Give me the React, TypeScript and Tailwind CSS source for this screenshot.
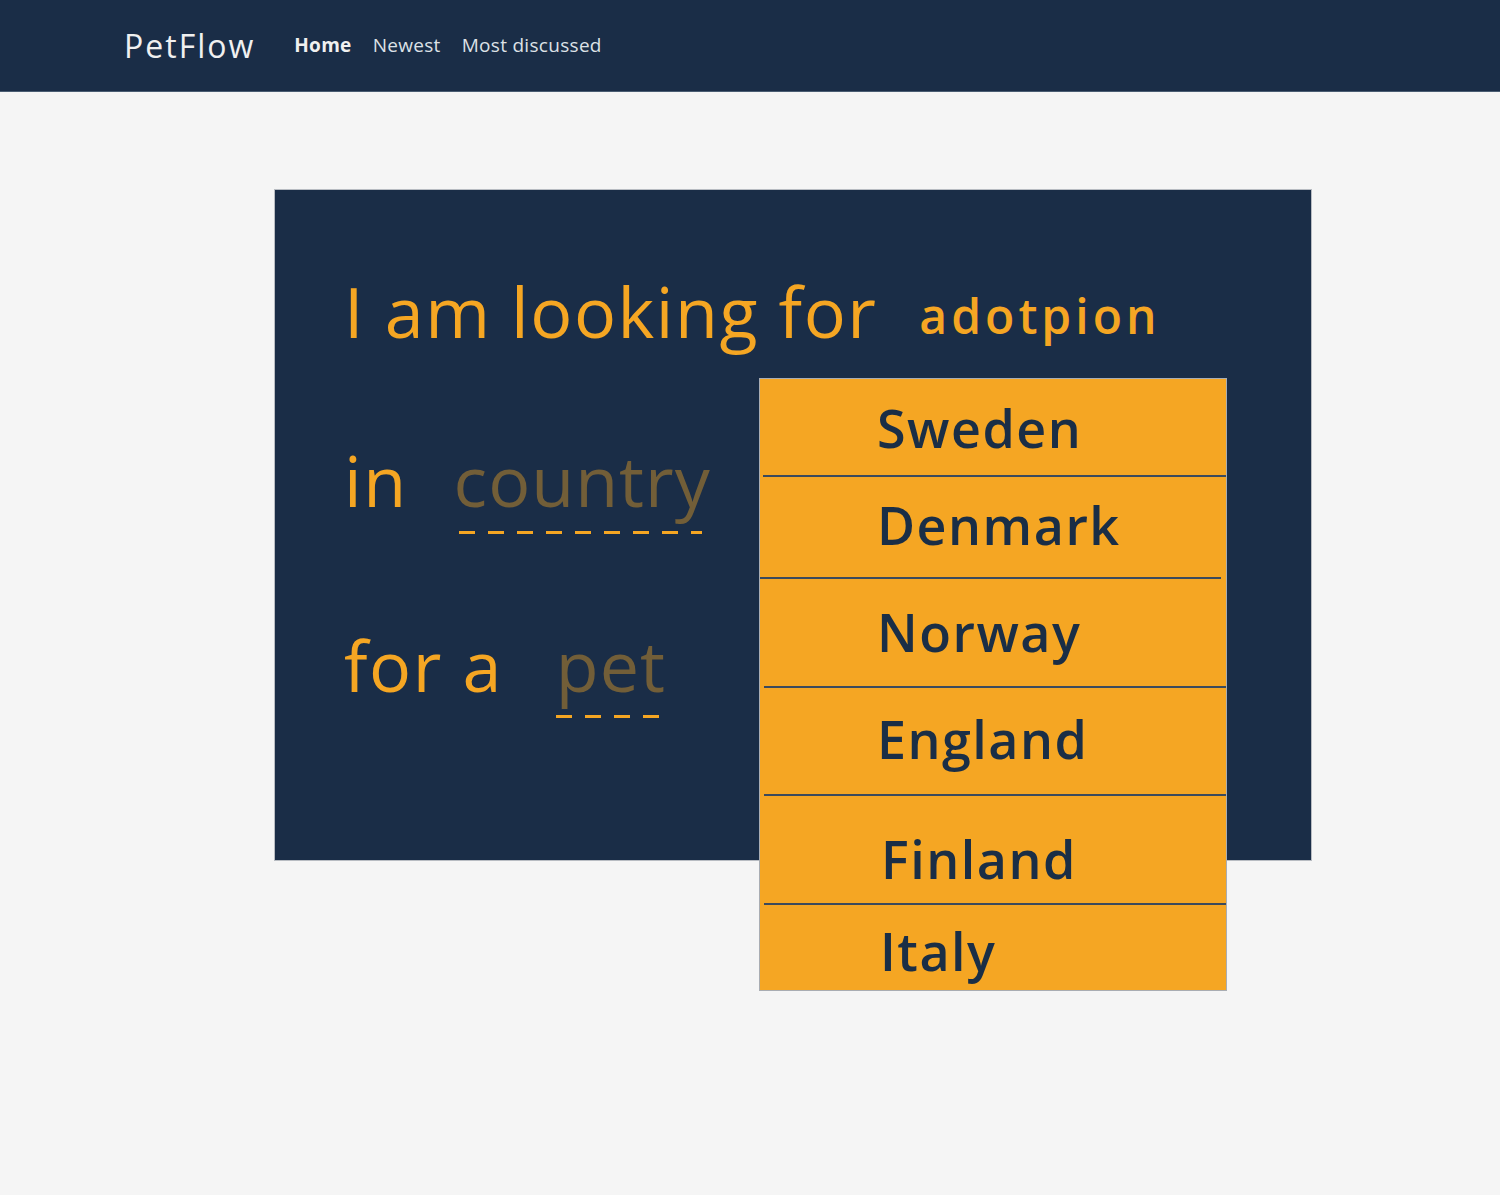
import React from 'react';

const navLinks = [
  { label: 'Home', active: true },
  { label: 'Newest', active: false },
  { label: 'Most discussed', active: false },
];

// each item: height, top padding for the text, left nudge, separator inset
const countries = [
  { name: 'Sweden', h: 'h-[96px]', pt: 'pt-[23px]', pl: 'pl-[117px]', line: 'ml-[3px]' },
  { name: 'Denmark', h: 'h-[100px]', pt: 'pt-[22px]', pl: 'pl-[117px]', line: 'mr-[5px]' },
  { name: 'Norway', h: 'h-[107px]', pt: 'pt-[27px]', pl: 'pl-[117px]', line: 'ml-[4px]' },
  { name: 'England', h: 'h-[106px]', pt: 'pt-[25px]', pl: 'pl-[117px]', line: 'ml-[4px]' },
  { name: 'Finland', h: 'h-[107px]', pt: 'pt-[37px]', pl: 'pl-[121px]', line: 'ml-[4px]' },
  { name: 'Italy', h: 'h-[85px]', pt: 'pt-[20px]', pl: 'pl-[120px]', line: '' },
];

const dashes = 'h-[3px] bg-[repeating-linear-gradient(90deg,#f5a623_0px,#f5a623_16px,transparent_16px,transparent_29px)]';

export default function App() {
  return (
    <div className="min-h-[1195px] bg-[#f5f5f5] font-['Open_Sans',sans-serif]">
      {/* Navbar */}
      <nav className="h-[92px] bg-[#1a2d47] border-b border-[#4a5d72] flex items-center pl-[124px]">
        <span className="text-[32px] text-[#f0f0f0] tracking-[2px] leading-none mr-[39px]">PetFlow</span>
        <div className="flex items-center gap-[21px]">
          {navLinks.map((link) => (
            <a
              key={link.label}
              className={`text-[19px] leading-none tracking-[0.3px] ${link.active ? 'font-bold text-[#f0f0f0]' : 'font-normal text-[#dde1e6]'}`}
            >
              {link.label}
            </a>
          ))}
        </div>
      </nav>

      {/* Search card */}
      <div className="pt-[97px] pl-[274px]">
        <div className="relative w-[1038px] h-[672px] bg-[#1a2d47] border border-[#b8bcc2] pl-[69px] pt-[86px] text-[#f5a623]">
          <div className="flex items-baseline h-[70px] leading-none">
            <span className="text-[70px] tracking-[1.5px]">I am looking for</span>
            <span className="ml-[42px] text-[48px] font-semibold tracking-[4px] relative -top-[4px]">adotpion</span>
          </div>

          <div className="flex items-start h-[70px] mt-[99px] leading-none">
            <span className="text-[70px] tracking-[1.5px]">in</span>
            <div className="ml-[46px] flex flex-col">
              <span className="text-[70px] tracking-[1px] text-[#725e38]">country</span>
              <div className={`ml-[5px] mt-[16px] w-[243px] ${dashes}`} />
            </div>
          </div>

          <div className="flex items-start h-[70px] mt-[115px] leading-none">
            <span className="text-[70px] tracking-[1.5px]">for a</span>
            <div className="ml-[53px] flex flex-col">
              <span className="text-[70px] tracking-[1px] text-[#725e38]">pet</span>
              <div className={`mt-[15px] w-[106px] ${dashes}`} />
            </div>
          </div>

          {/* Open country dropdown */}
          <ul className="absolute left-[484px] top-[188px] w-[468px] bg-[#f5a623] border border-[#a9adb3] text-[#1a2e46]">
            {countries.map((c, i) => (
              <li key={c.name}>
                <div className={`${c.h} ${c.pt} ${c.pl} text-[52px] font-semibold tracking-[1.5px] leading-none`}>
                  {c.name}
                </div>
                {i < countries.length - 1 && <div className={`h-[2px] bg-[#3b4a5c] ${c.line}`} />}
              </li>
            ))}
          </ul>
        </div>
      </div>
    </div>
  );
}
